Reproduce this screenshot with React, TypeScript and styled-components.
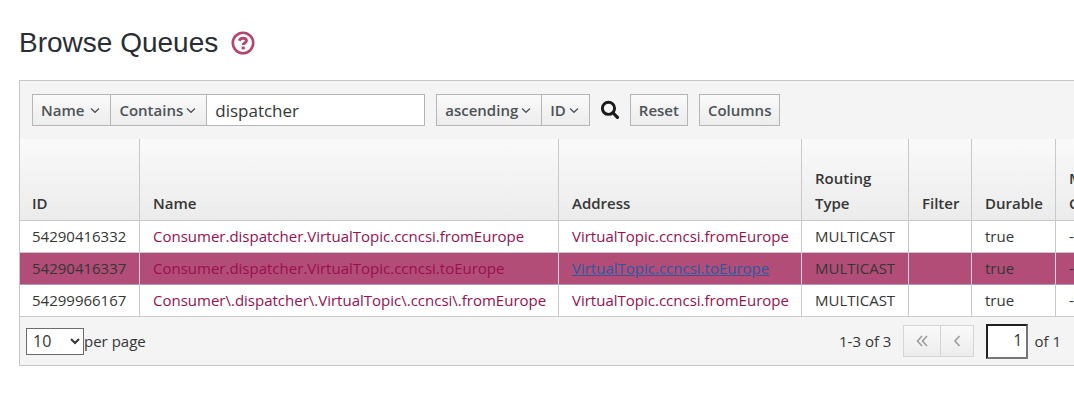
import React from "react";
import styled, { createGlobalStyle, css } from "styled-components";

const GlobalStyle = createGlobalStyle`
  *, *::before, *::after { box-sizing: border-box; }
  body {
    margin: 0;
    background: #fff;
    color: #363636;
    font-family: "Open Sans", "Noto Sans", sans-serif;
    font-size: 15px;
    line-height: 25px;
    overflow-x: hidden;
  }
  button, input, select { font: inherit; color: inherit; margin: 0; border-radius: 0; }
`;

const Page = styled.main`
  padding: 24px 0 40px 19px;
`;

const Heading = styled.header`
  display: flex;
  align-items: center;
  gap: 13px;
  height: 38px;
  margin-bottom: 18px;
`;

const Title = styled.h1`
  margin: 0;
  font: 400 28px/38px "Liberation Sans", Arial, sans-serif;
  color: #292e34;
`;

const PlainButton = styled.button`
  display: flex;
  padding: 0;
  border: 0;
  background: none;
  cursor: pointer;
`;

const Panel = styled.section`
  border: 1px solid #c7c7c7;
  border-right: 0;
  background: #f4f4f4;
  overflow: hidden;
`;

const Toolbar = styled.form`
  display: flex;
  align-items: center;
  gap: 11px;
  padding: 13px 12px;
`;

const Group = styled.div`
  display: flex;
`;

const buttonFace = css`
  display: flex;
  align-items: center;
  height: 32px;
  border: 1px solid #b5b5b5;
  background: linear-gradient(#fafafa, #ececec);
  color: #4d5258;
  font-weight: 600;
  white-space: nowrap;
  cursor: pointer;
`;

const ToolButton = styled.button`
  ${buttonFace}
  padding: 0 8px;
`;

const MenuButton = styled(ToolButton)<{ $joined?: boolean; $gap?: number }>`
  gap: ${(p) => p.$gap ?? 3}px;
  padding-right: 10px;
  margin-left: ${(p) => (p.$joined ? -1 : 0)}px;
`;

const FilterInput = styled.input`
  width: 219px;
  height: 32px;
  margin-left: -1px;
  padding: 0 8px;
  border: 1px solid #b5b5b5;
  background: #fff;
  font-size: 17px;
`;

const TableScroll = styled.div`
  overflow: hidden;
`;

const Table = styled.table`
  table-layout: fixed;
  width: 1156px;
  border-collapse: separate;
  border-spacing: 0;
`;

const cellPadding = css`
  padding: 0 12px;
  &:not(:first-child) { padding-left: 13px; }
`;

const HeadCell = styled.th`
  ${cellPadding}
  height: 82px;
  padding-bottom: 4px;
  border-right: 1px solid #c9c9c9;
  border-bottom: 1px solid #c9c9c9;
  vertical-align: bottom;
  text-align: left;
  font-weight: 600;
`;

const HeadRow = styled.tr`
  background: linear-gradient(#fafafa, #ebebeb);
`;

const Row = styled.tr<{ $active?: boolean }>`
  background: ${(p) => (p.$active ? "#b24d77" : "#fff")};
`;

const Cell = styled.td<{ $active?: boolean }>`
  ${cellPadding}
  height: 32px;
  border-right: 1px solid ${(p) => (p.$active ? "#e3d3dc" : "#c9c9c9")};
  border-bottom: 1px solid ${(p) => (p.$active ? "#a898c8" : "#c9c9c9")};
  white-space: nowrap;
`;

const CellLink = styled.a<{ $hovered?: boolean }>`
  color: ${(p) => (p.$hovered ? "#2b5aa3" : "#98104f")};
  text-decoration: ${(p) => (p.$hovered ? "underline" : "none")};
`;

const Footer = styled.footer`
  display: flex;
  align-items: center;
  justify-content: space-between;
  height: 48px;
  padding: 0 13px 0 6px;
`;

const SizeLabel = styled.label`
  display: flex;
  align-items: center;
`;

const SizeSelect = styled.select`
  width: 58px;
  height: 27px;
  padding: 0 0 0 2px;
  border: 1px solid #6b6b6b;
  background: #fff;
  font-size: 16px;
`;

const Pager = styled.nav`
  display: flex;
  align-items: center;
  gap: 12px;
`;

const PagerButton = styled.button<{ $joined?: boolean }>`
  ${buttonFace}
  justify-content: center;
  width: ${(p) => (p.$joined ? 34 : 38)}px;
  margin-left: ${(p) => (p.$joined ? -1 : 0)}px;
  padding: 0;
  border-color: #d4d4d4;
  color: #9c9c9c;
`;

const PageLabel = styled.label`
  display: flex;
  align-items: center;
  gap: 6px;
`;

const PageInput = styled.input`
  width: 42px;
  height: 35px;
  padding: 0 4px 3px;
  border: 2px inset #767676;
  background: #fff;
  font-size: 16px;
  text-align: right;
`;

const Caret = () => (
  <svg width="10" height="10" viewBox="0 0 10 10" fill="none" stroke="#4d5258" strokeWidth="1.2" aria-hidden="true">
    <path d="M1 3.5 5 7.3 9 3.5" />
  </svg>
);

const HelpIcon = () => (
  <svg width="24" height="24" viewBox="0 0 24 24" fill="none" stroke="#b0486f" aria-hidden="true">
    <circle cx="12" cy="12" r="10.2" strokeWidth="2.6" />
    <path d="M8.3 9.7C9 7.9 10.2 7.3 12 7.3c2 0 3.4 1 3.4 2.5 0 2.2-3.2 2.2-3.2 4.2" strokeWidth="3" />
    <path d="M10.6 17h3.2" strokeWidth="2.8" />
  </svg>
);

const SearchIcon = () => (
  <svg width="18" height="20" viewBox="0 0 18 20" fill="none" stroke="#1a1a1a" aria-hidden="true">
    <circle cx="7.5" cy="8.3" r="6.1" strokeWidth="2.9" />
    <path d="m12.2 13 4.2 4.4" strokeWidth="3.2" strokeLinecap="round" />
  </svg>
);

const Chevrons = ({ double }: { double?: boolean }) => (
  <svg width="12" height="12" viewBox="0 0 12 12" fill="none" stroke="currentColor" strokeWidth="1.6" aria-hidden="true">
    {double ? <path d="M6 1 1.5 6 6 11M11 1 6.5 6 11 11" /> : <path d="M8.5 1 4 6l4.5 5" />}
  </svg>
);

const columns: [string, number][] = [
  ["ID", 120],
  ["Name", 419],
  ["Address", 243],
  ["Routing Type", 107],
  ["Filter", 63],
  ["Durable", 84],
  ["Max Consumers", 120],
];

const queues = [
  { id: "54290416332", name: "Consumer.dispatcher.VirtualTopic.ccncsi.fromEurope", address: "VirtualTopic.ccncsi.fromEurope" },
  { id: "54290416337", name: "Consumer.dispatcher.VirtualTopic.ccncsi.toEurope", address: "VirtualTopic.ccncsi.toEurope", active: true },
  { id: "54299966167", name: "Consumer\\.dispatcher\\.VirtualTopic\\.ccncsi\\.fromEurope", address: "VirtualTopic.ccncsi.fromEurope" },
];

export default function App() {
  return (
    <>
      <GlobalStyle />
      <Page>
        <Heading>
          <Title>Browse Queues</Title>
          <PlainButton type="button" aria-label="Help"><HelpIcon /></PlainButton>
        </Heading>
        <Panel>
          <Toolbar onSubmit={(e) => e.preventDefault()}>
            <Group>
              <MenuButton type="button" $gap={6}>Name<Caret /></MenuButton>
              <MenuButton type="button" $joined>Contains<Caret /></MenuButton>
              <FilterInput aria-label="Filter value" defaultValue="dispatcher" />
            </Group>
            <Group>
              <MenuButton type="button">ascending<Caret /></MenuButton>
              <MenuButton type="button" $joined>ID<Caret /></MenuButton>
            </Group>
            <PlainButton type="submit" aria-label="Search"><SearchIcon /></PlainButton>
            <ToolButton type="button">Reset</ToolButton>
            <ToolButton type="button">Columns</ToolButton>
          </Toolbar>
          <TableScroll>
            <Table>
              <colgroup>
                {columns.map(([label, width]) => <col key={label} width={width} />)}
              </colgroup>
              <thead>
                <HeadRow>
                  {columns.map(([label]) => <HeadCell key={label} scope="col">{label}</HeadCell>)}
                </HeadRow>
              </thead>
              <tbody>
                {queues.map((q) => (
                  <Row key={q.id} $active={q.active}>
                    <Cell $active={q.active}>{q.id}</Cell>
                    <Cell $active={q.active}><CellLink href="#queue">{q.name}</CellLink></Cell>
                    <Cell $active={q.active}><CellLink href="#address" $hovered={q.active}>{q.address}</CellLink></Cell>
                    <Cell $active={q.active}>MULTICAST</Cell>
                    <Cell $active={q.active} />
                    <Cell $active={q.active}>true</Cell>
                    <Cell $active={q.active}>-1</Cell>
                  </Row>
                ))}
              </tbody>
            </Table>
          </TableScroll>
          <Footer>
            <SizeLabel>
              <SizeSelect defaultValue="10">
                <option>10</option>
                <option>20</option>
                <option>50</option>
              </SizeSelect>
              per page
            </SizeLabel>
            <Pager aria-label="Pagination">
              <span>1-3 of 3</span>
              <Group>
                <PagerButton type="button" aria-label="First page"><Chevrons double /></PagerButton>
                <PagerButton type="button" $joined aria-label="Previous page"><Chevrons /></PagerButton>
              </Group>
              <PageLabel>
                <PageInput aria-label="Current page" defaultValue="1" />
                of 1
              </PageLabel>
            </Pager>
          </Footer>
        </Panel>
      </Page>
    </>
  );
}
